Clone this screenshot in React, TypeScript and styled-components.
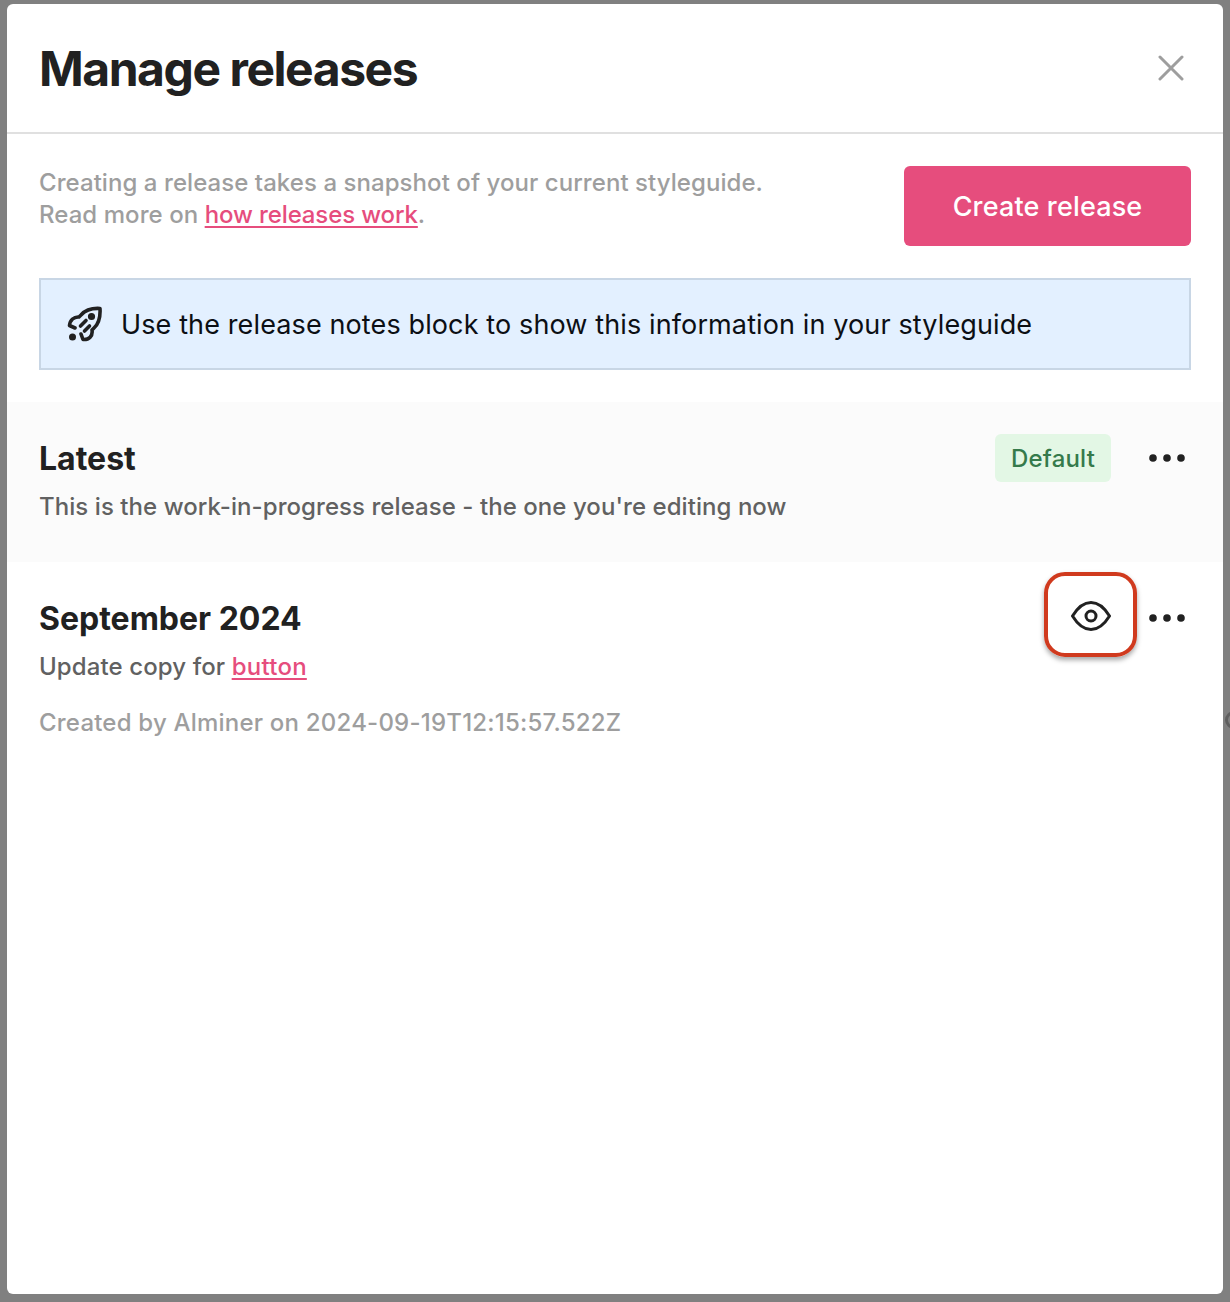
import React from "react";
import styled, { createGlobalStyle } from "styled-components";

const Global = createGlobalStyle`
  html, body { margin: 0; padding: 0; background: #808080; }
  body { font-family: Inter, "Liberation Sans", sans-serif; -webkit-font-smoothing: antialiased; }
  * { box-sizing: border-box; }
`;

const Backdrop = styled.div`
  position: relative;
  width: 1230px;
  height: 1302px;
  padding: 4px 7px 8px;
  background: #808080;
  overflow: hidden;
`;

const Spinner = styled.div`
  position: absolute;
  left: 1225px;
  top: 711px;
  width: 18px;
  height: 18px;
  border: 3px solid #5f5f5f;
  border-radius: 50%;
`;

const Modal = styled.div`
  height: 1290px;
  background: #fff;
  border-radius: 6px;
  overflow: hidden;
`;

const Header = styled.header`
  height: 130px;
  border-bottom: 2px solid #e0e0e0;
  padding: 2px 32px 0;
  display: flex;
  align-items: center;
  justify-content: space-between;
`;

const Title = styled.h1`
  margin: 0;
  font-size: 48px;
  line-height: 56px;
  font-weight: 700;
  letter-spacing: -1.45px;
  color: #212121;
`;

const CloseButton = styled.button`
  width: 32px;
  height: 32px;
  margin: -2px 4px 0 0;
  padding: 0;
  border: 0;
  background: none;
  color: #9e9e9e;
  display: flex;
  align-items: center;
  justify-content: center;
`;

const Body = styled.div`
  padding: 32px 32px 32px;
`;

const IntroRow = styled.div`
  display: flex;
  justify-content: space-between;
  align-items: flex-start;
`;

const Intro = styled.p`
  margin: 1px 0 0;
  font-size: 24px;
  line-height: 32px;
  font-weight: 450;
  letter-spacing: 0.06px;
  color: #9e9e9e;
`;

const Link = styled.a<{ $tracking?: number }>`
  color: #e64d7d;
  text-decoration: underline;
  text-underline-offset: 3px;
  text-decoration-thickness: 2px;
  letter-spacing: ${(p) => p.$tracking ?? 0}px;
`;

const PrimaryButton = styled.button`
  width: 287px;
  height: 80px;
  padding: 1px 0 0;
  border: 0;
  border-radius: 6px;
  background: #e64d7d;
  color: #fff;
  font: 550 27px/32px Inter, "Liberation Sans", sans-serif;
  letter-spacing: 0.15px;
`;

const Banner = styled.div`
  margin-top: 32px;
  height: 92px;
  background: #e3f0ff;
  border: 2px solid #c8d6e5;
  display: flex;
  align-items: center;
  gap: 18px;
  padding-left: 26px;
  font-size: 27px;
  letter-spacing: 0.12px;
  color: #0c0f14;
`;

const ReleaseRow = styled.section<{ $tinted?: boolean }>`
  display: flex;
  justify-content: space-between;
  align-items: flex-start;
  padding: 32px 32px 39px;
  background: ${(p) => (p.$tinted ? "#fbfbfb" : "#fff")};
`;

const ReleaseName = styled.h2`
  margin: 0;
  font-size: 32px;
  line-height: 50px;
  font-weight: 700;
  color: #212121;
`;

const ReleaseText = styled.p<{ $tracking: number }>`
  margin: 7px 0 0;
  font-size: 24px;
  line-height: 32px;
  font-weight: 450;
  letter-spacing: ${(p) => p.$tracking}px;
  color: #616161;
`;

const ReleaseMeta = styled.p`
  margin: 24px 0 0;
  font-size: 24px;
  line-height: 32px;
  font-weight: 450;
  letter-spacing: 0.21px;
  color: #9e9e9e;
`;

const Actions = styled.div`
  display: flex;
  align-items: center;
  gap: 6px;
  height: 48px;
`;

const Badge = styled.span`
  height: 48px;
  width: 116px;
  border-radius: 6px;
  background: #e3f7e5;
  color: #357a4b;
  font-size: 24px;
  font-weight: 450;
  letter-spacing: 0.2px;
  display: flex;
  align-items: center;
  justify-content: center;
  margin-right: 26px;
`;

const More = styled.button`
  width: 48px;
  height: 48px;
  padding: 0;
  border: 0;
  background: none;
  color: #212121;
  display: flex;
  align-items: center;
  justify-content: center;
`;

const Highlight = styled.div`
  width: 93px;
  height: 85px;
  align-self: flex-start;
  margin-top: -22px;
  padding-top: 3px;
  border: 4px solid #d03a1e;
  border-radius: 21px;
  box-shadow: 0 3px 5px rgba(0, 0, 0, 0.35);
  color: #212121;
  display: flex;
  align-items: center;
  justify-content: center;
`;

const Rocket = () => (
  <svg width="36" height="36" viewBox="0 0 36 36" fill="none" stroke="#212121" strokeWidth="3.6" strokeLinecap="round" strokeLinejoin="round">
    <path d="M8 22L2.500 19.500C3 14 7 10.500 12 11L14 9C18.500 4 25 2 33 2.500C33.500 11 32 17.500 27 22L25 24C26 30 22 34 16 33.500L14 28" />
    <path d="M13.500 20l5.500-5.500M17.500 25l5-5" />
    <circle cx="24.500" cy="10.500" r="1.800" fill="#212121" />
    <circle cx="5.500" cy="31" r="3.500" fill="#212121" stroke="none" />
  </svg>
);

const Dots = () => (
  <svg width="36" height="8" viewBox="0 0 36 8" fill="currentColor">
    <circle cx="4" cy="4" r="3.800" />
    <circle cx="18" cy="4" r="3.800" />
    <circle cx="32" cy="4" r="3.800" />
  </svg>
);

const Eye = () => (
  <svg width="40" height="30" viewBox="0 0 40 30" fill="none" stroke="currentColor" strokeWidth="3" strokeLinejoin="round">
    <path d="M1.500 15C7 6 13 1.500 20 1.500S33 6 38.500 15C33 24 27 28.500 20 28.500S7 24 1.500 15Z" />
    <circle cx="20" cy="15" r="5" />
  </svg>
);

const CloseIcon = () => (
  <svg width="26" height="26" viewBox="0 0 26 26" fill="none" stroke="currentColor" strokeWidth="3" strokeLinecap="round">
    <path d="M2 2l22 22M24 2L2 24" />
  </svg>
);

export default function App() {
  return (
    <>
      <Global />
      <Backdrop>
        <Spinner />
        <Modal>
          <Header>
            <Title>Manage releases</Title>
            <CloseButton aria-label="Close"><CloseIcon /></CloseButton>
          </Header>
          <Body>
            <IntroRow>
              <Intro>
                Creating a release takes a snapshot of your current styleguide.
                <br />
                Read more on <Link href="#" $tracking={-0.12}>how releases work</Link>.
              </Intro>
              <PrimaryButton>Create release</PrimaryButton>
            </IntroRow>
            <Banner>
              <Rocket />
              Use the release notes block to show this information in your styleguide
            </Banner>
          </Body>
          <ReleaseRow $tinted>
            <div>
              <ReleaseName>Latest</ReleaseName>
              <ReleaseText $tracking={0.06}>This is the work-in-progress release - the one you're editing now</ReleaseText>
            </div>
            <Actions>
              <Badge>Default</Badge>
              <More aria-label="More"><Dots /></More>
            </Actions>
          </ReleaseRow>
          <ReleaseRow>
            <div>
              <ReleaseName>September 2024</ReleaseName>
              <ReleaseText $tracking={0.1}>Update copy for <Link href="#" $tracking={0.25}>button</Link></ReleaseText>
              <ReleaseMeta>Created by Alminer on 2024-09-19T12:15:57.522Z</ReleaseMeta>
            </div>
            <Actions>
              <Highlight><Eye /></Highlight>
              <More aria-label="More"><Dots /></More>
            </Actions>
          </ReleaseRow>
        </Modal>
      </Backdrop>
    </>
  );
}
